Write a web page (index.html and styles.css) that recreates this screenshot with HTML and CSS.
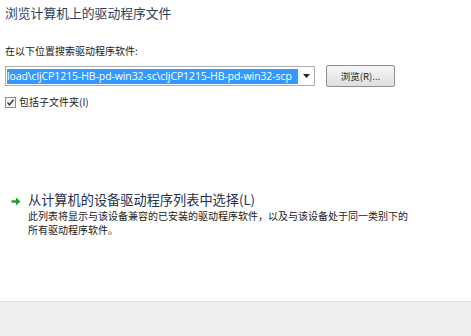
FILE: index.html
```html
<!DOCTYPE html>
<html lang="zh">
<head>
<meta charset="utf-8">
<link rel="stylesheet" href="styles.css">
</head>
<body>
<div class="page">
  <div class="main">
    <div class="title">浏览计算机上的驱动程序文件</div>
    <div class="label">在以下位置搜索驱动程序软件:</div>
    <div class="row">
      <div class="combo">
        <span class="sel">load\cljCP1215-HB-pd-win32-sc\cljCP1215-HB-pd-win32-scp</span>
        <span class="arrow"><svg width="7" height="4" viewBox="0 0 7 4"><path d="M0 0H7L3.5 4Z" fill="#222"/></svg></span>
      </div>
      <div class="btn">浏览(R)...</div>
    </div>
    <div class="check">
      <span class="box"><svg width="9" height="9" viewBox="0 0 9 9"><path d="M1.5 4.5L3.5 6.8L7.5 1.8" fill="none" stroke="#2a3a55" stroke-width="1.4"/></svg></span>
      <span>包括子文件夹(I)</span>
    </div>
    <div class="option">
      <span class="garrow"><svg width="10" height="9" viewBox="0 0 10 9"><path d="M0.5 3.2H5V0.5L9.5 4.5L5 8.5V5.8H0.5Z" fill="#2f9a2f"/></svg></span>
      <div class="otext">
        <div class="olink">从计算机的设备驱动程序列表中选择(L)</div>
        <div class="odesc">此列表将显示与该设备兼容的已安装的驱动程序软件，以及与该设备处于同一类别下的<br>所有驱动程序软件。</div>
      </div>
    </div>
  </div>
  <div class="footer"></div>
</div>
</body>
</html>
```
FILE: styles.css
```css
html, body {
  margin: 0;
  padding: 0;
  background: #fff;
}
body {
  font-family: "Noto Sans CJK SC", "Noto Sans", sans-serif;
  color: #1a1a1a;
}
.page {
  height: 336px;
  display: flex;
  flex-direction: column;
}
.main {
  flex: 1;
  padding: 0 0 0 5px;
  background: #fff;
}
.title {
  font-size: 12.8px;
  line-height: 18px;
  color: #2c3e5c;
  margin-top: 4px;
}
.label {
  font-size: 10px;
  line-height: 14px;
  margin-top: 22px;
}
.row {
  display: flex;
  align-items: center;
  margin-top: 7px;
  gap: 11px;
}
.combo {
  width: 307px;
  height: 18px;
  border: 1px solid #abadb3;
  display: flex;
  align-items: center;
  padding-left: 1px;
  box-sizing: content-box;
}
.sel {
  background: #3399ff;
  color: #fff;
  font-family: "Open Sans", "Noto Sans", sans-serif;
  font-size: 10.5px;
  line-height: 15px;
  white-space: nowrap;
  overflow: hidden;
  width: 291px;
  letter-spacing: -0.1px;
}
.arrow {
  flex: 1;
  display: flex;
  justify-content: center;
}
.btn {
  width: 67px;
  height: 20px;
  border: 1px solid #8e8f8f;
  border-radius: 2px;
  background: linear-gradient(#f6f6f6, #dedede);
  font-size: 9.5px;
  display: flex;
  align-items: center;
  justify-content: center;
  color: #222;
}
.check {
  display: flex;
  align-items: center;
  gap: 3px;
  margin-top: 8px;
  font-size: 10px;
  line-height: 14px;
}
.box {
  width: 9px;
  height: 9px;
  border: 1px solid #8f8f8f;
  background: #f4f4f4;
  display: flex;
}
.option {
  display: flex;
  margin-top: 82px;
}
.garrow {
  width: 23px;
  padding-left: 6px;
  padding-top: 6px;
  box-sizing: border-box;
  display: flex;
  align-items: flex-start;
}
.olink {
  font-size: 13.2px;
  line-height: 18px;
  color: #1f3050;
}
.odesc {
  font-size: 10px;
  line-height: 14px;
  color: #1a1a1a;
}
.footer {
  height: 34px;
  border-top: 1px solid #dadada;
  background: linear-gradient(#efefef 80%, #eeeef6);
}
```
